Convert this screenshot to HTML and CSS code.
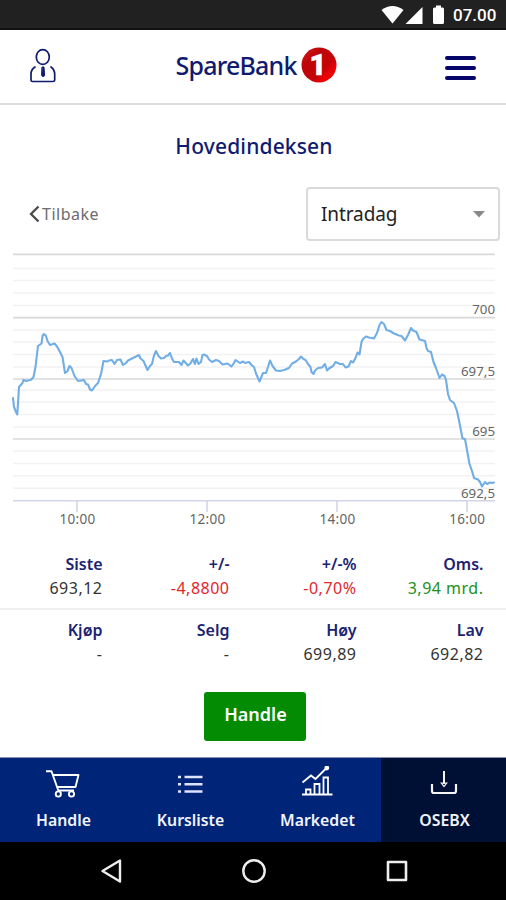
FILE: index.html
```html
<!DOCTYPE html>
<html lang="no">
<head>
<meta charset="utf-8">
<title>Hovedindeksen</title>
<link rel="stylesheet" href="styles.css">
</head>
<body>
<div class="screen">
  <div class="status">
    <svg width="64" height="20" viewBox="380 5 64 20" fill="#fff">
      <path d="M381.500 10Q392.500 2 403.500 10L392.500 23.500Z"/>
      <path d="M422.500 7V24H405.500Z"/>
      <path d="M434.500 7.500H436V5.500H441V7.500H442.500Q444 7.500 444 9V22.500Q444 24 442.500 24H434.500Q433 24 433 22.500V9Q433 7.500 434.500 7.500Z"/>
    </svg>
    <span class="clock">07.00</span>
  </div>

  <header class="header">
    <svg class="user" width="28" height="36" viewBox="29 48 28 36" fill="none" stroke="#101b70" stroke-width="1.700" stroke-linecap="round" stroke-linejoin="round">
      <ellipse cx="42.800" cy="57" rx="6.500" ry="7.400"/>
      <path d="M35 67Q31 69.500 31 74V80Q31 81.500 32.500 81.500H53Q54.700 81.500 54.700 80V74Q54.500 69.500 51 67"/>
      <path d="M42.300 67H44L44.600 75.500L43.200 77L41.800 75.500Z" fill="#101b70" stroke-width="1"/>
    </svg>
    <div class="logo">
      <span class="logo-name">SpareBank</span>
      <svg width="36" height="36" viewBox="0 0 36 36">
        <defs>
          <linearGradient id="ball" x1="0" y1="0" x2="1" y2="1">
            <stop offset="0" stop-color="#df1715"/><stop offset=".3" stop-color="#bd0509"/><stop offset=".65" stop-color="#c60308"/><stop offset=".75" stop-color="#ed0003"/><stop offset="1" stop-color="#e00000"/>
          </linearGradient>
        </defs>
        <circle cx="18" cy="18" r="17.500" fill="url(#ball)"/>
        <text class="logo-digit" x="17" y="28" text-anchor="middle">1</text>
      </svg>
    </div>
    <div class="burger"><i></i><i></i><i></i></div>
  </header>

  <h1 class="title">Hovedindeksen</h1>

  <div class="tools">
    <div class="back">
      <svg width="11" height="18" viewBox="0 0 11 18" fill="none" stroke="#4a4a4a" stroke-width="2.300"><path d="M9.500 1.500L2 9L9.500 16.500"/></svg>
      <span>Tilbake</span>
    </div>
    <div class="select">
      <span>Intradag</span>
      <svg width="12" height="7" viewBox="0 0 12 7"><path d="M0 0H12L6 6.500Z" fill="#8a8a8a"/></svg>
    </div>
  </div>

  <svg class="chart" width="506" height="290" viewBox="0 245 506 290">
    <path class="minor" d="M13 268.500H495M13 280.500H495M13 293H495M13 305.500H495M13 330H495M13 342H495M13 354.500H495M13 367H495M13 390H495M13 402H495M13 414.500H495M13 427H495M13 451H495M13 463.500H495M13 475.700H495M13 488.300H495"/>
    <path class="major" d="M13 254.400H495M13 317.600H495M13 379H495M13 439H495"/>
    <path class="axis" d="M13 500.700H495M77 501V512M207 501V512M337 501V512M467 501V512"/>
    <g class="ylabels" text-anchor="end">
      <text x="495" y="314">700</text>
      <text x="495" y="376">697,5</text>
      <text x="495" y="436">695</text>
      <text x="495" y="498">692,5</text>
    </g>
    <path class="line" d="M13 398L14 407L16 412L17.300 414.500L19 387L22.500 383L23.500 380L26 381L31 379.700L33.500 377L35.500 367L38 346L41.500 343.500L42.500 336L44 334L46 336L47.500 341L50 345L54.500 343.500L57 346.500L60 352L62.500 357L65 373L67.500 371L69.500 366L71.500 368L74.500 376L78 381L84 380L86 384L88 384.500L90 389.500L92 390.500L95.500 385.500L98 383L101 374L103.500 361L107.500 361.500L109 360.500L112 360L114.500 364L117 360L120.500 359.500L123 365L126 363L128 360.500L132 358.500L139 355L140.500 358.500L143.500 361L147.500 370L150 366L152 364L154 355.500L156 351L158.500 356L161 358.500L164 358L166 356L168 355.500L170 353L172 358.500L174 362L179 362L181.500 365L183.500 360.500L188 365.500L190 364L193 359L195 364L196.500 358.500L198.500 364L201 362L202.500 355L204 354.500L207 356L209 359.500L212 362L216 360L219 361L222.500 364.500L227.500 363.500L231.500 366.500L234 363L235.500 360L240 363L243 361.500L245 363L249 362L251.500 365L254 367L256 373.500L259.500 381.500L263 373L266 373L268 367L270 360.500L272.500 366L276 370.500L280 371L284 370L289 368L292 363.500L296 361.500L299 359L301 356.500L303.500 359L305.500 360L308 364L310.500 367L311.500 372L313.500 374L315 370.500L318 368L322 367.500L325 364L327 370.500L329 368.500L333 366L335.500 362L340 364L343 364L345.500 367.500L348.500 366.500L351 361L353 362.500L355.500 358L357.500 352.500L359.500 354.500L361.500 342L363 339L366 336.500L369 337.500L374 338.500L377 333L379.500 325L381.500 322L384 324L386.500 330L390 331L394 333.500L399 335.500L401.500 336L405 340.500L408 335L411 328L413 330.500L416.500 332L419.500 339.500L425 341L426.500 348L428 351L431 352L433.500 362L436 368L439.500 378L442 374.500L444.500 376L446 380L448 394L450 400L454 403L457 411L459.500 423L462.500 438.500L465 439L467 450L469.500 464L472 471L474 478L478 479.500L480 482L482 486.500L485 482L487 484L490 482.500L492 483L494 482.500"/>
    <g class="xlabels" text-anchor="middle">
      <text x="77.500" y="524">10:00</text>
      <text x="207.500" y="524">12:00</text>
      <text x="337.500" y="524">14:00</text>
      <text x="467.200" y="524">16:00</text>
    </g>
  </svg>

  <div class="stats">
    <dl><dt>Siste</dt><dd>693,12</dd></dl>
    <dl><dt>+/-</dt><dd class="down">-4,8800</dd></dl>
    <dl><dt>+/-%</dt><dd class="down">-0,70%</dd></dl>
    <dl><dt>Oms.</dt><dd class="up">3,94 mrd.</dd></dl>
  </div>
  <div class="stats second">
    <dl><dt>Kjøp</dt><dd>-</dd></dl>
    <dl><dt>Selg</dt><dd>-</dd></dl>
    <dl><dt>Høy</dt><dd>699,89</dd></dl>
    <dl><dt>Lav</dt><dd>692,82</dd></dl>
  </div>

  <div class="action"><button class="buy">Handle</button></div>

  <nav class="tabs">
    <a class="tab">
      <svg width="36" height="32" viewBox="46 766 36 32" fill="none" stroke="#fff" stroke-width="1.900" stroke-linejoin="round">
        <path d="M46 771.300H51.500L58.300 790.500H74"/><path d="M53 775H78.500L75.500 787H57"/><circle cx="58.300" cy="794" r="2.600"/><circle cx="71.500" cy="794" r="2.600"/>
      </svg>
      <span>Handle</span>
    </a>
    <a class="tab">
      <svg width="36" height="32" viewBox="173 766 36 32" stroke="#dfe4ff" stroke-width="2.600">
        <path d="M178 777H181M184.500 777H202.500M178 784.200H181M184.500 784.200H202.500M178 791.500H181M184.500 791.500H202.500"/>
      </svg>
      <span>Kursliste</span>
    </a>
    <a class="tab">
      <svg width="36" height="32" viewBox="300 766 36 32" fill="none" stroke="#fff" stroke-width="1.800">
        <path d="M302 794.500H332.500M306 794V789.500H310.500V794M314.500 794V784H319.500V794M323.500 794V777.500H328V794"/><path d="M302.500 782.500L311 775.500L315.500 779L326 768.500"/><circle cx="326.800" cy="768" r="1.500" fill="#fff"/>
      </svg>
      <span>Markedet</span>
    </a>
    <a class="tab active">
      <svg width="36" height="32" viewBox="427 766 36 32" fill="none" stroke="#f4f4f4" stroke-width="2.200">
        <path d="M432 784V791Q432 793 434 793H454Q456 793 456 791V784"/><path d="M444 771V784" stroke-width="2"/><path d="M441.300 783H446.700L444 786.500Z" stroke-width="1.200"/>
      </svg>
      <span>OSEBX</span>
    </a>
  </nav>

  <div class="sysnav">
    <svg width="24" height="26" viewBox="99 858 24 26" fill="none" stroke="#eee" stroke-width="2.400" stroke-linejoin="round"><path d="M120 860.500V881.500L102.500 871Z"/></svg>
    <svg width="26" height="26" viewBox="0 0 26 26" fill="none" stroke="#eee" stroke-width="2.400"><circle cx="13" cy="13" r="10.700"/></svg>
    <svg width="24" height="26" viewBox="0 0 24 26" fill="none" stroke="#eee" stroke-width="2.600" stroke-linejoin="round"><rect x="3" y="4" width="18" height="18"/></svg>
  </div>
</div>
</body>
</html>
```
FILE: styles.css
```css
* { box-sizing: border-box; margin: 0; padding: 0; }
body { background: #fff; font-family: "Noto Sans", sans-serif; color: #333; }
svg { display: block; flex: none; }
.screen { width: 506px; height: 900px; display: flex; flex-direction: column; overflow: hidden; }
.status { height: 30px; background: #212121; border-bottom: 2px solid #111; display: flex; align-items: center; justify-content: flex-end; gap: 9px; padding: 2px 9px 0 0; }
.clock { color: #fff; font: 500 17px/20px Roboto, sans-serif; width: 44px; }
.header { height: 75px; border-bottom: 2px solid #dcdcda; display: flex; align-items: center; justify-content: space-between; padding: 0 30px 0 29px; }
.user { margin-top: -1px; }
.logo { display: flex; align-items: center; margin: -4px 0 0 10px; }
.logo-name { font-size: 25px; font-weight: 500; line-height: 36px; letter-spacing: -.8px; color: #101b70; width: 125px; white-space: nowrap; }
.logo-digit { font: 900 29px Roboto, sans-serif; fill: #fff; stroke: #fff; stroke-width: .6px; }
.burger { width: 31px; display: flex; flex-direction: column; gap: 6px; margin-top: 2px; }
.burger i { height: 4px; border-radius: 2px; background: #06066a; }
.title { font-size: 21px; font-weight: 500; line-height: 30px; letter-spacing: .15px; text-align: center; color: #101b70; margin-top: 26px; padding-left: 2px; }
.tools { display: flex; justify-content: space-between; align-items: center; height: 54px; margin-top: 26px; padding: 0 6px 0 29px; }
.back { display: flex; align-items: center; gap: 2px; color: #6c6c6c; font-size: 16px; letter-spacing: .5px; }
.select { width: 194px; height: 54px; border: 2px solid #dadada; border-radius: 4px; display: flex; align-items: center; justify-content: space-between; padding: 0 13px; color: #222; font-size: 19px; letter-spacing: -.1px; }
.chart { margin-top: 4px; }
.minor { stroke: #f2f2f2; stroke-width: 1.6; }
.major { stroke: #d9d9d9; stroke-width: 1.7; }
.axis { stroke: #d2d5e8; stroke-width: 1.6; fill: none; }
.ylabels { font-size: 13.3px; fill: #666; }
.xlabels { font-size: 13.5px; letter-spacing: .3px; fill: #666; }
.line { fill: none; stroke: #72aee6; stroke-width: 2.1; stroke-linejoin: round; stroke-linecap: round; }
.stats { display: grid; grid-template-columns: repeat(4, 127px); height: 75px; border-bottom: 2px solid #f0f0f0; padding-top: 17px; }
.stats.second { height: 75px; border: 0; padding-top: 8px; }
.stats dl { text-align: right; padding-right: 24.5px; font-size: 16px; line-height: 24px; }
.stats dt { color: #1b2372; font-weight: 600; }
.stats dd { letter-spacing: .5px; }
.stats .down { color: #e3262b; }
.stats .up { color: #218f21; }
.action { display: flex; justify-content: center; padding: 7px 0 0 3px; }
.buy { width: 102px; height: 49px; border: 0; border-radius: 3px; background: #038b03; color: #fff; font: 600 18px/44px "Noto Sans", sans-serif; padding: 0 0 5px 2px; }
.tabs { display: grid; grid-template-columns: repeat(4, 127px); height: 85px; margin-top: auto; background: #002477; border-top: 1px solid #8a91b5; }
.tab { display: flex; flex-direction: column; align-items: center; color: #f2f4ff; font-size: 15.8px; font-weight: 600; line-height: 24px; padding-top: 8px; gap: 10px; }
.tab.active { background: #001034; }
.sysnav { height: 58px; background: #000; display: flex; justify-content: center; align-items: center; gap: 118px; padding-left: 1px; }
```
